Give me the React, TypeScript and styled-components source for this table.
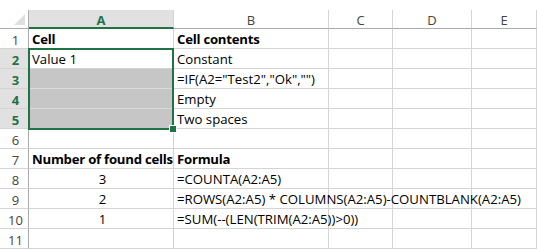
import React from "react";
import styled, { createGlobalStyle, css } from "styled-components";

const GlobalStyle = createGlobalStyle`
  html, body {
    margin: 0;
    padding: 0;
    background: #ffffff;
  }
`;

const GREEN = "#217346";
const GRID = "#d4d4d4";
const FONT = `"Open Sans", "Liberation Sans", sans-serif`;

const columns = ["A", "B", "C", "D", "E"];
const widths = [29, 145, 155, 64, 79, 65];

interface CellData {
  text?: string;
  bold?: boolean;
  center?: boolean;
  shaded?: boolean;
}

const rows: CellData[][] = [
  [{ text: "Cell", bold: true }, { text: "Cell contents", bold: true }],
  [{ text: "Value 1" }, { text: "Constant" }],
  [{ shaded: true }, { text: '=IF(A2="Test2","Ok","")' }],
  [{ shaded: true }, { text: "Empty" }],
  [{ shaded: true }, { text: "Two spaces" }],
  [],
  [
    { text: "Number of found cells", bold: true },
    { text: "Formula", bold: true },
  ],
  [{ text: "3", center: true }, { text: "=COUNTA(A2:A5)" }],
  [
    { text: "2", center: true },
    { text: "=ROWS(A2:A5) * COLUMNS(A2:A5)-COUNTBLANK(A2:A5)" },
  ],
  [{ text: "1", center: true }, { text: "=SUM(--(LEN(TRIM(A2:A5))>0))" }],
  [],
];

const selectedRows = [2, 3, 4, 5];

const App = () => {
  return (
    <>
      <GlobalStyle />
      <Sheet>
        <Corner>
          <CornerTriangle />
        </Corner>
        {columns.map((col, i) => (
          <ColHeader key={col} col={i + 2} selected={i === 0}>
            {col}
          </ColHeader>
        ))}
        {rows.map((row, r) => (
          <React.Fragment key={r}>
            <RowHeader row={r + 2} selected={selectedRows.includes(r + 1)}>
              {r + 1}
            </RowHeader>
            {columns.map((col, c) => {
              const cell = row[c] || {};
              return (
                <Cell
                  key={col}
                  row={r + 2}
                  col={c + 2}
                  bold={cell.bold}
                  center={cell.center}
                  shaded={cell.shaded}
                >
                  {cell.text}
                </Cell>
              );
            })}
          </React.Fragment>
        ))}
        <Selection>
          <FillHandle />
        </Selection>
      </Sheet>
    </>
  );
};

export default App;

const Sheet = styled.div`
  display: grid;
  grid-template-columns: ${widths.map((w) => `${w}px`).join(" ")};
  grid-template-rows: 19px repeat(11, 20px);
  padding-top: 10px;
  width: 537px;
  height: 250px;
  box-sizing: border-box;
  background: #ffffff;
  font-family: ${FONT};
  overflow: hidden;
`;

const Corner = styled.div`
  grid-row: 1;
  grid-column: 1;
  position: relative;
  border-right: 1px solid #ababab;
  border-bottom: 1px solid #ababab;
  box-sizing: border-box;
`;

const CornerTriangle = styled.div`
  position: absolute;
  right: 3px;
  bottom: 3px;
  width: 0;
  height: 0;
  border-left: 11px solid transparent;
  border-bottom: 11px solid #dfdfdf;
`;

const ColHeader = styled.div<{ col: number; selected?: boolean }>`
  grid-row: 1;
  grid-column: ${({ col }) => col};
  display: flex;
  align-items: center;
  justify-content: center;
  box-sizing: border-box;
  border-right: 1px solid ${GRID};
  font-size: 13px;
  padding-top: 2px;
  ${({ selected }) =>
    selected
      ? css`
          background: #e1e1e1;
          color: ${GREEN};
          font-weight: 700;
          border-bottom: 2px solid ${GREEN};
        `
      : css`
          background: #ffffff;
          color: #444444;
          border-bottom: 1px solid #ababab;
        `};
`;

const RowHeader = styled.div<{ row: number; selected?: boolean }>`
  grid-row: ${({ row }) => row};
  grid-column: 1;
  display: flex;
  align-items: center;
  justify-content: center;
  padding-left: 3px;
  padding-top: 3px;
  box-sizing: border-box;
  border-right: 1px solid #ababab;
  border-bottom: 1px solid ${GRID};
  font-size: 13px;
  ${({ selected }) =>
    selected
      ? css`
          background: #e1e1e1;
          color: ${GREEN};
          font-weight: 700;
        `
      : css`
          background: #ffffff;
          color: #444444;
        `};
`;

const Cell = styled.div<{
  row: number;
  col: number;
  bold?: boolean;
  center?: boolean;
  shaded?: boolean;
}>`
  grid-row: ${({ row }) => row};
  grid-column: ${({ col }) => col};
  display: flex;
  align-items: flex-end;
  justify-content: ${({ center }) => (center ? "center" : "flex-start")};
  padding: 0 0 0 3px;
  box-sizing: border-box;
  border-right: 1px solid ${GRID};
  border-bottom: 1px solid ${({ shaded }) => (shaded ? "#dadada" : GRID)};
  background: ${({ shaded }) => (shaded ? "#c6c6c6" : "#ffffff")};
  font-size: 13.2px;
  font-weight: ${({ bold }) => (bold ? 700 : 400)};
  letter-spacing: ${({ bold }) => (bold ? "-0.25px" : "0")};
  color: #000000;
  white-space: nowrap;
  overflow: visible;
  line-height: 18px;
  position: relative;
  z-index: ${({ col }) => 20 - col};
`;

const Selection = styled.div`
  grid-column: 2;
  grid-row: 3 / 7;
  position: relative;
  z-index: 30;
  margin: -1px 0 -1px -1px;
  border: 2px solid ${GREEN};
  pointer-events: none;
`;

const FillHandle = styled.div`
  position: absolute;
  right: -5px;
  bottom: -5px;
  width: 6px;
  height: 6px;
  background: ${GREEN};
  border: 1px solid #ffffff;
`;
